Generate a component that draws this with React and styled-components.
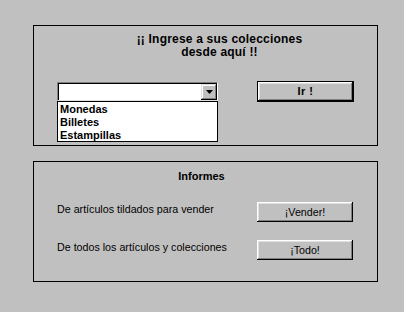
import React from "react";
import styled, { createGlobalStyle } from "styled-components";

const Global = createGlobalStyle`
  html, body { margin: 0; padding: 0; background: #c0c0c0; }
  body { font-family: "Liberation Sans", Arial, sans-serif; color: #000; }
  * { box-sizing: border-box; }
`;

const Page = styled.div`
  width: 404px;
  height: 312px;
  background: #c0c0c0;
  padding: 25px 0 0 33px;
  display: flex;
  flex-direction: column;
  gap: 15px;
`;

const Panel = styled.section`
  width: 345px;
  height: 121px;
  border: 1px solid #000;
  display: flex;
  flex-direction: column;
  padding: ${(p) => p.$pad};
`;

const Title = styled.div`
  font-size: ${(p) => p.$size || "11px"};
  letter-spacing: ${(p) => p.$spacing || "0"};
  font-weight: bold;
  line-height: 13px;
  text-align: center;
  padding: ${(p) => p.$pad || "0"};
  white-space: pre;
`;

const PickRow = styled.div`
  display: flex;
  align-items: flex-start;
  gap: 39px;
  margin-top: 22px;
`;

const ComboColumn = styled.div`
  display: flex;
  flex-direction: column;
  width: 161px;
  margin-top: 1px;
`;

const Combo = styled.div`
  height: 19px;
  width: 161px;
  background: #fff;
  border-top: 1px solid #808080;
  border-left: 1px solid #808080;
  border-right: 1px solid #fff;
  border-bottom: 1px solid #dfdfdf;
  box-shadow: inset 1px 1px 0 #000;
  display: flex;
  justify-content: flex-end;
  padding: 1px 0 1px 1px;
`;

const ArrowButton = styled.div`
  width: 16px;
  height: 16px;
  background: #c0c0c0;
  box-shadow: inset -1px -1px 0 #000, inset 1px 1px 0 #dfdfdf,
    inset -2px -2px 0 #808080, inset 2px 2px 0 #fff;
  display: flex;
  align-items: center;
  justify-content: center;
`;

const List = styled.ul`
  list-style: none;
  margin: 0;
  padding: 1px 0 0 2px;
  width: 161px;
  height: 41px;
  background: #fff;
  border: 1px solid #000;
`;

const Item = styled.li`
  font-size: 11px;
  font-weight: bold;
  line-height: 13px;
`;

const Button = styled.button`
  font-family: "Liberation Sans", Arial, sans-serif;
  font-size: ${(p) => (p.$bold ? "11px" : "10.7px")};
  font-weight: ${(p) => (p.$bold ? "bold" : "normal")};
  letter-spacing: ${(p) => (p.$bold ? "0.5px" : "0")};
  color: #000;
  width: ${(p) => (p.$default ? "97px" : "96px")};
  height: ${(p) => (p.$default ? "21px" : "20px")};
  padding: 0;
  margin: 0;
  background: #c0c0c0;
  border: ${(p) => (p.$default ? "1px solid #000" : "none")};
  box-shadow: inset -1px -1px 0 #000, inset 1px 1px 0 #fff,
    inset -2px -2px 0 #808080, inset 2px 2px 0 #dfdfdf;
  display: flex;
  align-items: center;
  justify-content: center;
  line-height: 13px;
`;

const ReportList = styled.div`
  display: grid;
  grid-template-columns: 200px 96px;
  row-gap: 18px;
  margin-top: 19px;
`;

const Label = styled.span`
  font-size: 10.7px;
  line-height: 13px;
  margin-top: 1px;
  white-space: nowrap;
`;

export default function App() {
  return (
    <>
      <Global />
      <Page>
        <Panel $pad="7px 0 0 23px">
          <Title $pad="0 0 0 5px" $size="12px" $spacing="0.2px">
            {"¡¡ Ingrese a sus colecciones\ndesde aquí !!"}
          </Title>
          <PickRow>
            <ComboColumn>
              <Combo>
                <ArrowButton>
                  <svg width="7" height="4" viewBox="0 0 7 4">
                    <path d="M0 0H7L3.5 4Z" fill="#000" />
                  </svg>
                </ArrowButton>
              </Combo>
              <List>
                <Item>Monedas</Item>
                <Item>Billetes</Item>
                <Item>Estampillas</Item>
              </List>
            </ComboColumn>
            <Button $default $bold>Ir !</Button>
          </PickRow>
        </Panel>
        <Panel $pad="8px 0 0 23px">
          <Title $pad="0 31px 0 0">Informes</Title>
          <ReportList>
            <Label>De artículos tildados para vender</Label>
            <Button>¡Vender!</Button>
            <Label>De todos los artículos y colecciones</Label>
            <Button>¡Todo!</Button>
          </ReportList>
        </Panel>
      </Page>
    </>
  );
}
